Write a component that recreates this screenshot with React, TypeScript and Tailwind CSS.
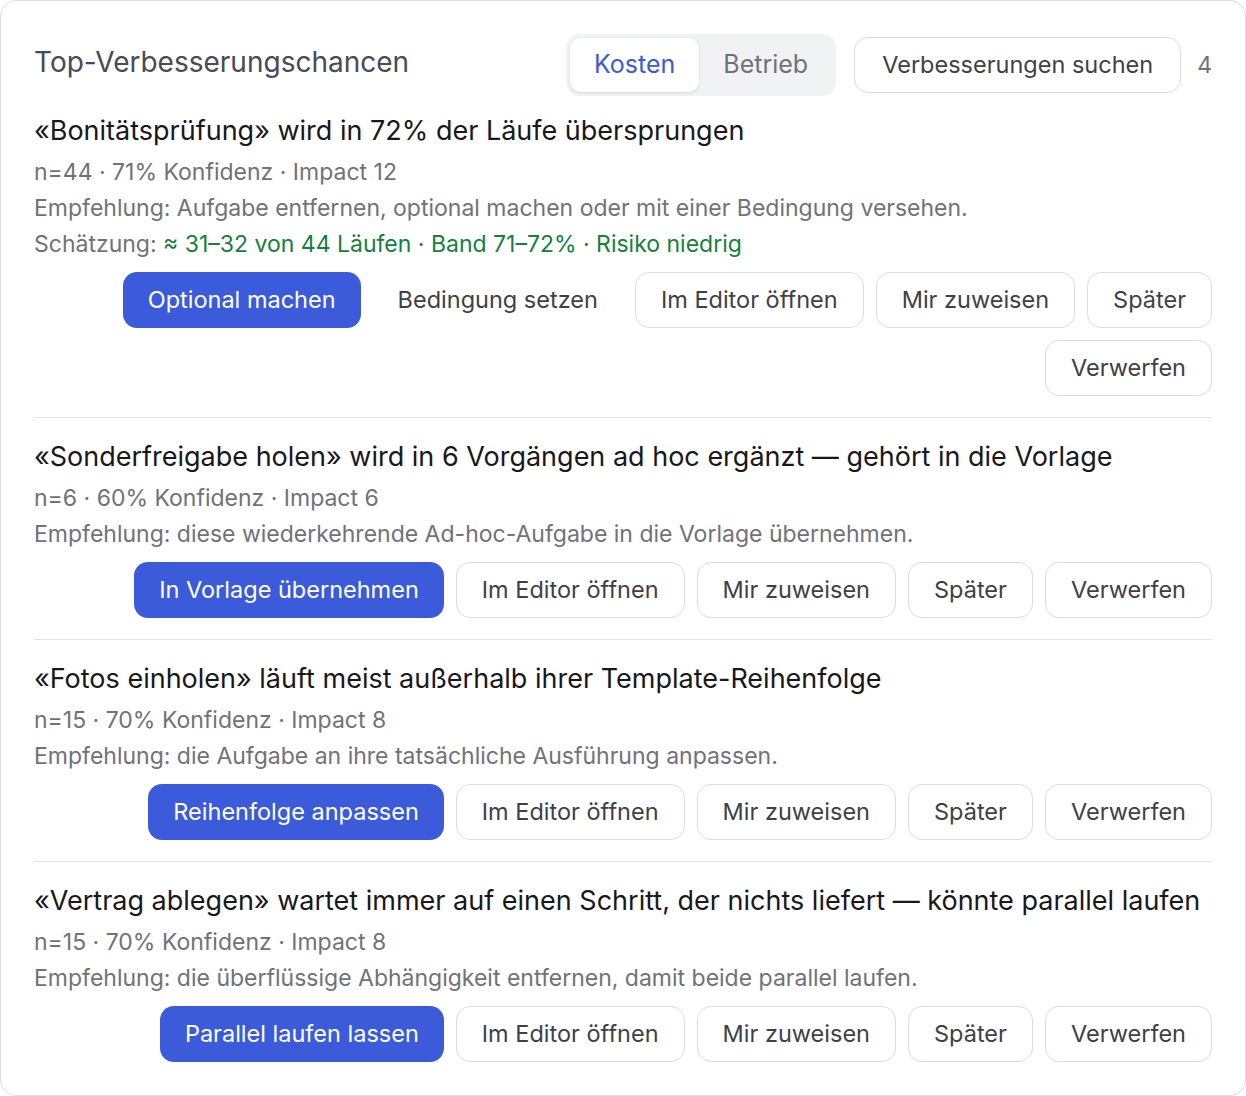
import React from "react";

type Item = {
  title: string;
  meta: string;
  rec: string;
  estimate?: string;
  primary: string;
  ghost?: string;
};

const items: Item[] = [
  {
    title: "«Bonitätsprüfung» wird in 72% der Läufe übersprungen",
    meta: "n=44 · 71% Konfidenz · Impact 12",
    rec: "Empfehlung: Aufgabe entfernen, optional machen oder mit einer Bedingung versehen.",
    estimate: "≈ 31–32 von 44 Läufen · Band 71–72% · Risiko niedrig",
    primary: "Optional machen",
    ghost: "Bedingung setzen",
  },
  {
    title: "«Sonderfreigabe holen» wird in 6 Vorgängen ad hoc ergänzt — gehört in die Vorlage",
    meta: "n=6 · 60% Konfidenz · Impact 6",
    rec: "Empfehlung: diese wiederkehrende Ad-hoc-Aufgabe in die Vorlage übernehmen.",
    primary: "In Vorlage übernehmen",
  },
  {
    title: "«Fotos einholen» läuft meist außerhalb ihrer Template-Reihenfolge",
    meta: "n=15 · 70% Konfidenz · Impact 8",
    rec: "Empfehlung: die Aufgabe an ihre tatsächliche Ausführung anpassen.",
    primary: "Reihenfolge anpassen",
  },
  {
    title: "«Vertrag ablegen» wartet immer auf einen Schritt, der nichts liefert — könnte parallel laufen",
    meta: "n=15 · 70% Konfidenz · Impact 8",
    rec: "Empfehlung: die überflüssige Abhängigkeit entfernen, damit beide parallel laufen.",
    primary: "Parallel laufen lassen",
  },
];

const outline =
  "h-14 rounded-[14px] border border-[#dcdcde] bg-white px-[25px] text-[#3f3f46] whitespace-nowrap";

function Opportunity({ item }: { item: Item }) {
  return (
    <div className="py-[21px] first:pt-0 last:pb-0">
      <h3 className="mb-[5px] whitespace-nowrap text-[27px] leading-9 text-[#18181b]">
        {item.title}
      </h3>
      <div className="text-[23px] leading-9 text-[#71717a]">
        <p>{item.meta}</p>
        <p>{item.rec}</p>
        {item.estimate && (
          <p>
            Schätzung: <span className="text-[#15803d]">{item.estimate}</span>
          </p>
        )}
      </div>
      <div className="mt-[10px] flex flex-wrap justify-end gap-3 text-[23.5px]">
        <button className="h-14 whitespace-nowrap rounded-[14px] bg-[#3b5bdb] px-[25px] text-white">
          {item.primary}
        </button>
        {item.ghost && (
          <button className="h-14 whitespace-nowrap rounded-[14px] px-[25px] text-[#3f3f46]">
            {item.ghost}
          </button>
        )}
        <button className={outline}>Im Editor öffnen</button>
        <button className={outline}>Mir zuweisen</button>
        <button className={outline}>Später</button>
        <button className={outline}>Verwerfen</button>
      </div>
    </div>
  );
}

export default function App() {
  return (
    <div className="min-h-screen bg-white font-['Inter',sans-serif]">
      <section className="h-[1096px] w-[1246px] rounded-2xl border border-[#dcdcde] bg-white p-[33px]">
        <div className="flex h-[62px] items-center">
          <h2 className="mb-[6px] flex-1 text-[28px] text-[#4a4a55]">Top-Verbesserungschancen</h2>
          <div className="flex h-[62px] items-center rounded-[14px] bg-[#f1f2f4] p-1 text-[25px]">
            <button className="h-[54px] rounded-[11px] bg-white px-6 text-[#3b5bdb] shadow-[0_1px_3px_rgba(0,0,0,0.12)]">
              Kosten
            </button>
            <button className="h-[54px] px-6 text-[#71717a]">Betrieb</button>
          </div>
          <button className="ml-[18px] h-14 rounded-[14px] border border-[#dcdcde] bg-white px-[27px] text-[23.5px] text-[#3f3f46]">
            Verbesserungen suchen
          </button>
          <span className="ml-4 text-[23px] text-[#71717a]">4</span>
        </div>
        <div className="mt-[17px] divide-y divide-[#e4e4e7]">
          {items.map((item) => (
            <Opportunity key={item.primary} item={item} />
          ))}
        </div>
      </section>
    </div>
  );
}
